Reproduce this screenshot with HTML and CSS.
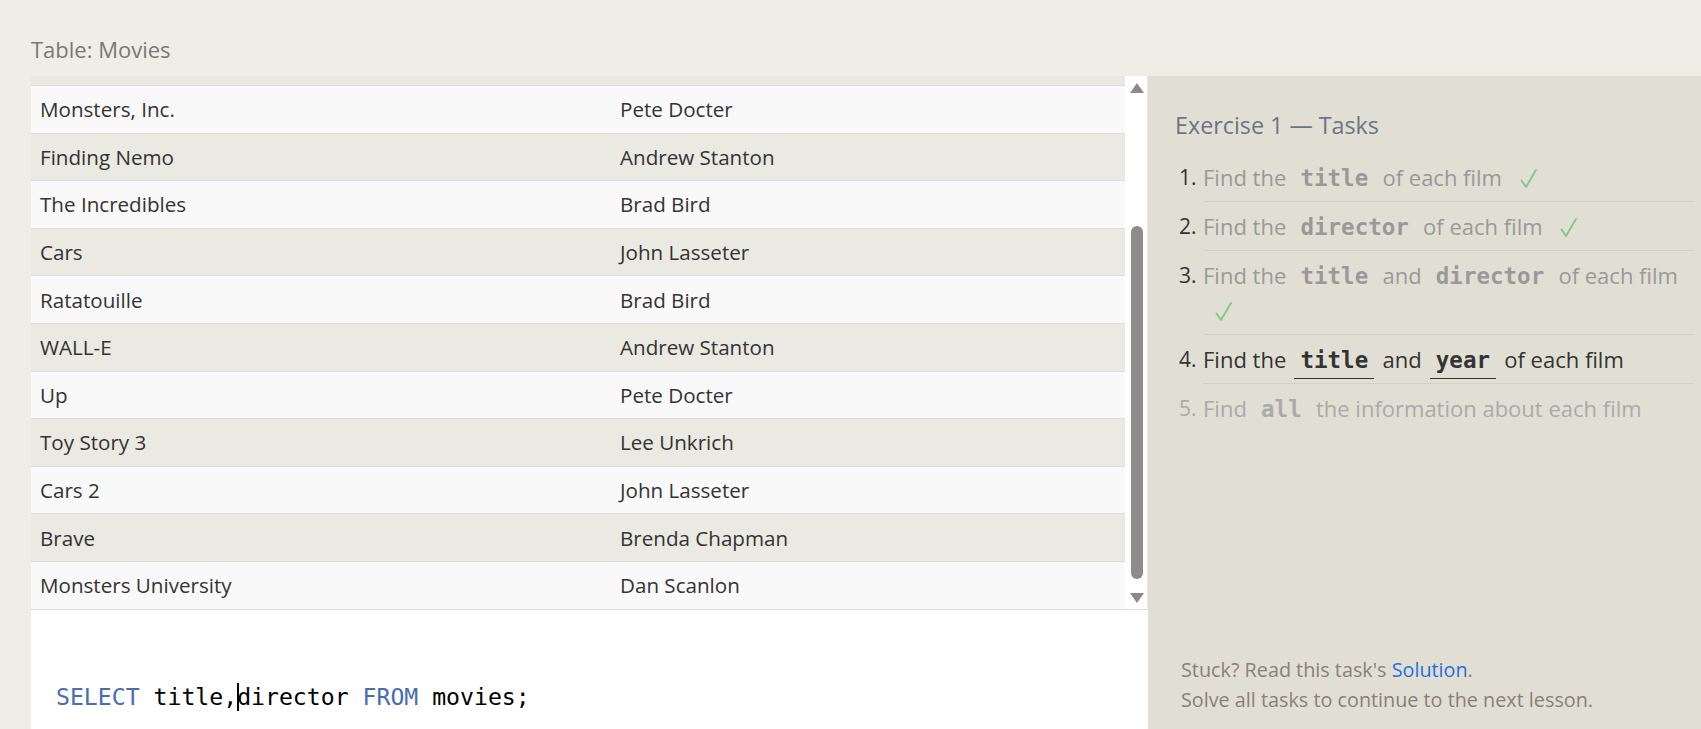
FILE: index.html
```html
<!DOCTYPE html>
<html lang="en">
<head>
<meta charset="utf-8">
<title>Exercise 1 — Tasks</title>
<link rel="stylesheet" href="styles.css">
</head>
<body>
<div class="page">
  <header class="top">
    <h1 class="table-title">Table: Movies</h1>
  </header>
  <div class="main">
    <section class="left">
      <div class="table-box">
        <div class="table-scroll">
          <div class="thead-strip"></div>
          <div class="row"><div class="cell">Monsters, Inc.</div><div class="cell">Pete Docter</div></div>
          <div class="row"><div class="cell">Finding Nemo</div><div class="cell">Andrew Stanton</div></div>
          <div class="row"><div class="cell">The Incredibles</div><div class="cell">Brad Bird</div></div>
          <div class="row"><div class="cell">Cars</div><div class="cell">John Lasseter</div></div>
          <div class="row"><div class="cell">Ratatouille</div><div class="cell">Brad Bird</div></div>
          <div class="row"><div class="cell">WALL-E</div><div class="cell">Andrew Stanton</div></div>
          <div class="row"><div class="cell">Up</div><div class="cell">Pete Docter</div></div>
          <div class="row"><div class="cell">Toy Story 3</div><div class="cell">Lee Unkrich</div></div>
          <div class="row"><div class="cell">Cars 2</div><div class="cell">John Lasseter</div></div>
          <div class="row"><div class="cell">Brave</div><div class="cell">Brenda Chapman</div></div>
          <div class="row"><div class="cell">Monsters University</div><div class="cell">Dan Scanlon</div></div>
        </div>
        <div class="scrollbar">
          <div class="arrow up"></div>
          <div class="thumb"></div>
          <div class="arrow down"></div>
        </div>
      </div>
      <div class="editor">
        <code class="sql"><span class="kw">SELECT</span> title,<span class="caret"></span>director <span class="kw">FROM</span> movies;</code>
      </div>
    </section>
    <aside class="right">
      <h2 class="ex-title">Exercise 1 — Tasks</h2>
      <ol class="tasks">
        <li class="task done"><span class="num">1.</span><div class="txt">Find the <code class="c">title</code> of each film <svg class="check" viewBox="0 0 17 19" aria-label="done"><polyline points="1.5,11.5 6,18 16,1"/></svg></div></li>
        <li class="task done"><span class="num">2.</span><div class="txt">Find the <code class="c">director</code> of each film <svg class="check" viewBox="0 0 17 19" aria-label="done"><polyline points="1.5,11.5 6,18 16,1"/></svg></div></li>
        <li class="task done"><span class="num">3.</span><div class="txt">Find the <code class="c">title</code> and <code class="c">director</code> of each film <svg class="check" viewBox="0 0 17 19" aria-label="done"><polyline points="1.5,11.5 6,18 16,1"/></svg></div></li>
        <li class="task current"><span class="num">4.</span><div class="txt">Find the <code class="c">title</code> and <code class="c">year</code> of each film</div></li>
        <li class="task todo"><span class="num">5.</span><div class="txt">Find <code class="c">all</code> the information about each film</div></li>
      </ol>
      <div class="footer">
        <p>Stuck? Read this task's <a href="#" class="link">Solution</a>.</p>
        <p>Solve all tasks to continue to the next lesson.</p>
      </div>
    </aside>
  </div>
</div>
</body>
</html>
```
FILE: styles.css
```css
* { box-sizing: border-box; }
html, body { margin: 0; padding: 0; }
body {
  background: #f0ede6;
  font-family: "Open Sans", "Noto Sans", sans-serif;
  color: #333;
  width: 1701px;
  height: 729px;
  overflow: hidden;
}
.page { display: flex; flex-direction: column; height: 729px; }

.top {
  height: 76px;
  padding: 21px 0 0 31px;
  display: flex;
  align-items: center;
}
.table-title {
  margin: 0;
  font-size: 22px;
  font-weight: 400;
  color: #7a7875;
}

.main { display: flex; flex: 1; min-height: 0; }

.left {
  width: 1117px;
  margin-left: 31px;
  display: flex;
  flex-direction: column;
}
.table-box {
  height: 534px;
  display: flex;
  background: #fff;
  border-bottom: 1px solid #dddcd8;
}
.table-scroll { flex: 1; overflow: hidden; }
.thead-strip {
  height: 10px;
  background: #eae8e1;
  border-bottom: 1px solid #dcdcd8;
}
.row {
  display: grid;
  grid-template-columns: 580px 1fr;
  align-items: center;
  height: 47.6px;
  border-bottom: 1px solid #dddcd8;
  background: #f9f9f9;
}
.row:nth-child(odd) { background: #eae9e2; }
.cell {
  padding-left: 9px;
  font-size: 20.6px;
  color: #333;
  white-space: nowrap;
}

.scrollbar {
  width: 23px;
  display: flex;
  flex-direction: column;
  align-items: center;
  padding: 7px 0 6px 1px;
  border-right: 1px solid #e8e6de;
}
.arrow {
  width: 0;
  height: 0;
  border-left: 7px solid transparent;
  border-right: 7px solid transparent;
}
.arrow.up { border-bottom: 10px solid #8a8a8a; }
.arrow.down { border-top: 10px solid #8a8a8a; margin-top: auto; }
.thumb {
  width: 12px;
  height: 353px;
  margin-top: 133px;
  border-radius: 6px;
  background: #8c8c8c;
}

.editor {
  flex: 1;
  background: #fff;
  padding: 54px 0 0 25px;
  display: flex;
  align-items: center;
}
.sql {
  font-family: "DejaVu Sans Mono", "Liberation Mono", monospace;
  font-size: 23.15px;
  color: #000;
  white-space: pre;
}
.kw { color: #4a6cb0; }
.caret {
  display: inline-block;
  width: 0;
  height: 28px;
  border-left: 2px solid #000;
  margin-right: -2px;
  vertical-align: -6px;
}

.right {
  flex: 1;
  background: #e1dfd4;
  display: flex;
  flex-direction: column;
  padding: 0 7px 0 27px;
}
.ex-title {
  margin: 34px 0 13px;
  font-size: 23.3px;
  line-height: 30px;
  font-weight: 400;
  color: #6b7587;
}
.tasks { list-style: none; margin: 0; padding: 0; }
.task { display: flex; align-items: flex-start; font-size: 22px; }
.num {
  width: 28px;
  padding: 7px 0 6px 4px;
  line-height: 35px;
  color: #333;
  font-size: 21px;
}
.txt {
  flex: 1;
  padding: 7px 0 6px;
  line-height: 35px;
  border-bottom: 1px solid #d3d0c5;
}
.done .txt { color: #999; }
.todo .txt, .todo .num { color: #aaa; border-bottom: none; }
.current .txt { color: #333; }
.c {
  font-family: "DejaVu Sans Mono", "Liberation Mono", monospace;
  font-weight: bold;
  font-size: 22.5px;
  line-height: 1;
  padding: 0 6px 5px;
  margin: 0 2.5px;
}
.current .c { border-bottom: 1px solid #333; }
.check {
  display: inline-block;
  width: 17px;
  height: 19px;
  margin-left: 12px;
  vertical-align: -2px;
  fill: none;
  stroke: #7ec784;
  stroke-width: 1.8;
  stroke-linecap: round;
  stroke-linejoin: round;
}

.footer {
  margin-top: auto;
  padding: 0 0 14px 6px;
  font-size: 19.8px;
  line-height: 30px;
  color: #8a7f78;
}
.footer p { margin: 0; }
.link { color: #1e6fe0; text-decoration: none; }
```
